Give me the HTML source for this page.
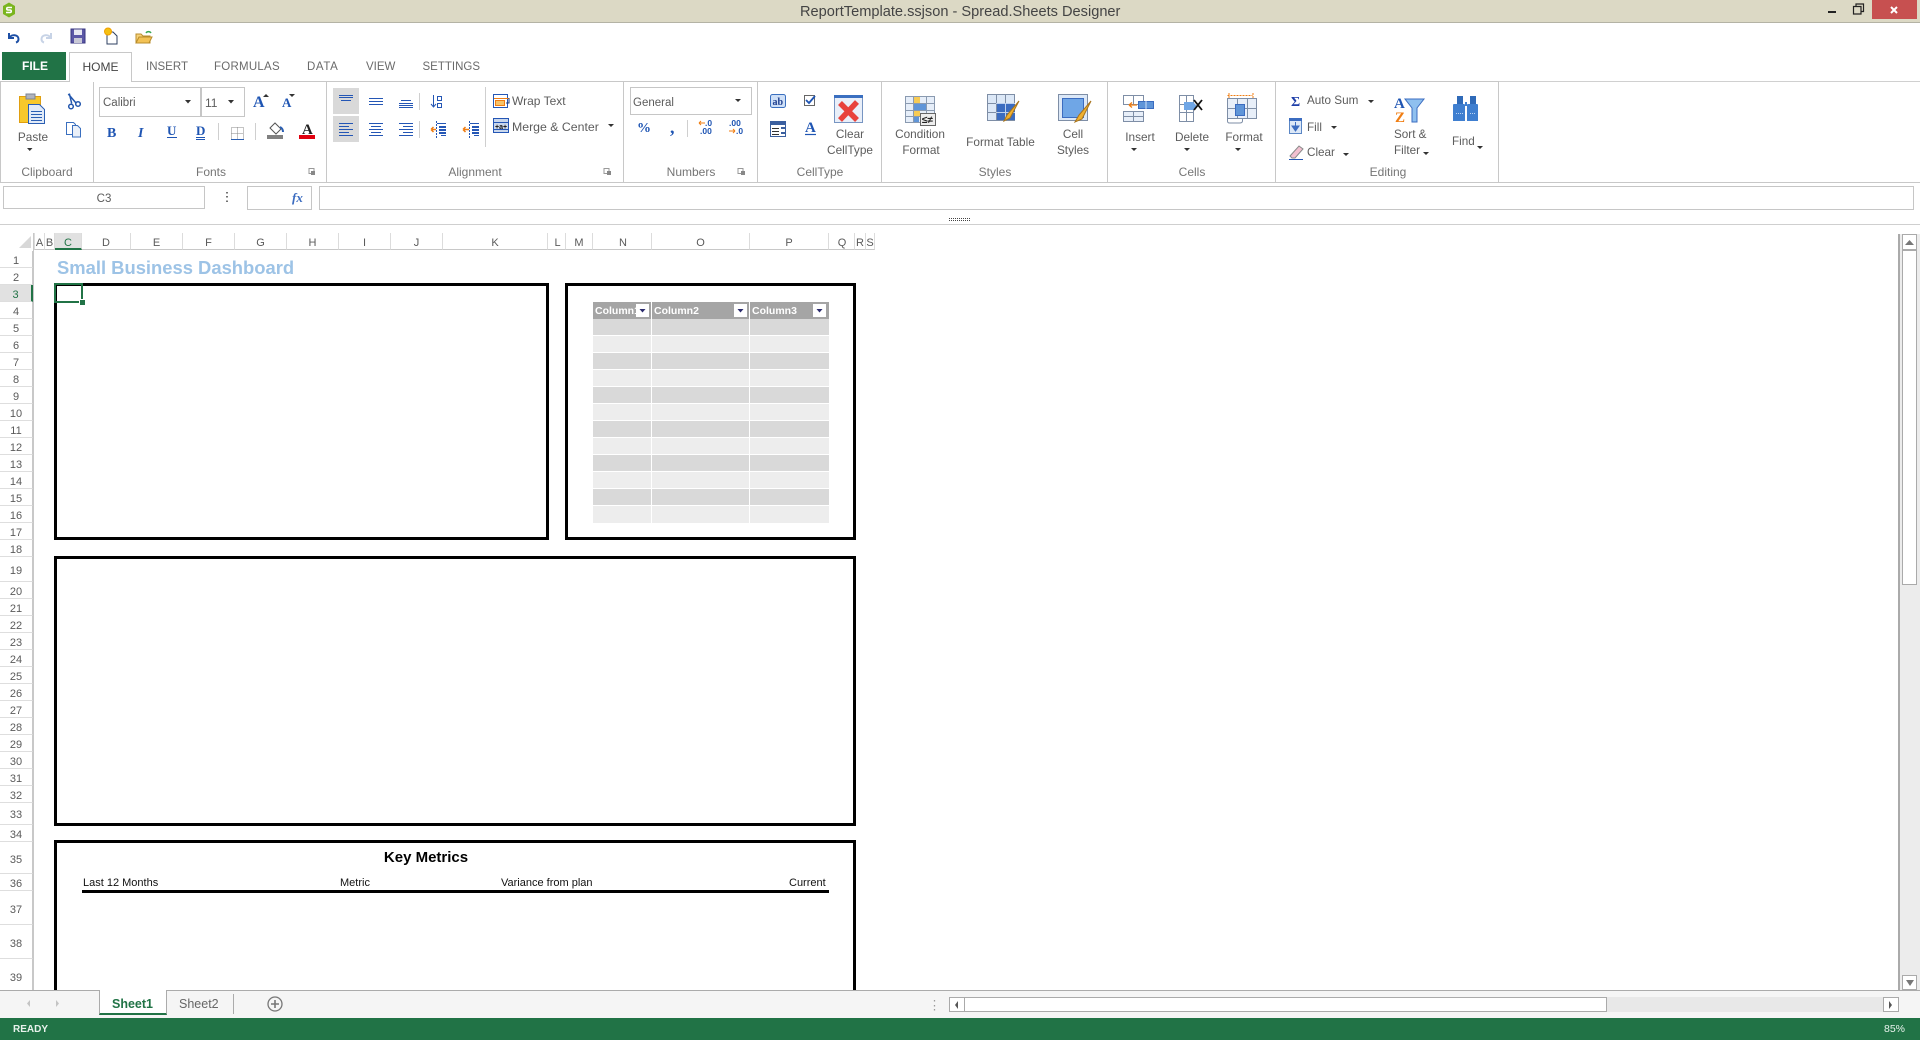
<!DOCTYPE html>
<html><head><meta charset="utf-8"><title>ReportTemplate.ssjson - Spread.Sheets Designer</title>
<style>
html,body{margin:0;padding:0;width:1920px;height:1040px;overflow:hidden;background:#fff;font-family:"Liberation Sans",sans-serif}
div{position:absolute;box-sizing:border-box}
.t{white-space:nowrap;font-size:11px;line-height:14px;color:#5c5c5c;height:14px}
.m{white-space:nowrap;font-size:11.8px;line-height:14px;color:#5c5c5c;height:14px;text-align:center}
.l{white-space:nowrap;font-size:12px;line-height:14px;color:#757575;height:14px;top:165px;text-align:center}
.tab{white-space:nowrap;font-size:11.5px;line-height:14px;color:#6a6a6a;top:60px}
.v{width:1px;background:#c8c8c8;top:81px;height:101px}
.r{left:0;width:33px;font-size:11px;color:#5a5a5a;display:flex;align-items:center;justify-content:center;border-bottom:1px solid #dedede;border-right:1px solid #c8c8c8;padding-top:3px}
.c{top:233px;height:17px;font-size:11px;color:#5a5a5a;display:flex;align-items:center;justify-content:center;border-right:1px solid #dcdcdc;border-bottom:1px solid #c8c8c8;padding-top:4px}
.b{border:3px solid #000}
.h{white-space:nowrap;font-size:11px;line-height:14px;color:#111;top:876px}
.bx{border:1px solid #c6c6c6;background:#fff}
.dk{background:#d9d9d9;left:593px;width:236px;height:16px}
.lt{background:#ededed;left:593px;width:236px;height:16px}
.fb{background:#fff;width:13px;height:13px;top:304px}
.hd{color:#fff;font-weight:bold;font-size:10.5px;line-height:14px;top:304px;white-space:nowrap;overflow:hidden}
</style></head><body>

<div style="left:0;top:0;width:1920px;height:23px;background:#dcd9c5;border-bottom:1px solid #b4b3a5"></div>
<div class="t" style="left:800px;top:5px;font-size:14.6px;color:#444">ReportTemplate.ssjson - Spread.Sheets Designer</div>
<div style="left:1872px;top:0;width:45px;height:19px;background:#c75050"></div>

<div style="left:2px;top:52px;width:64px;height:28px;background:#217346"></div>
<div class="t" style="left:22px;top:59px;color:#fff;font-weight:bold;font-size:12px;line-height:14px">FILE</div>
<div style="left:69px;top:52px;width:63px;height:30px;border:1px solid #c8c8c8;border-bottom:0;background:#fff;z-index:3"></div>
<div style="left:0;top:81px;width:1498px;height:1px;background:#c8c8c8"></div>
<div style="left:1498px;top:81px;width:422px;height:1px;background:#d0d0d0"></div>
<div style="left:0;top:182px;width:1920px;height:1px;background:#c8c8c8"></div>
<div class="tab" style="left:82.5px;color:#444;font-size:12px;z-index:4">HOME</div>
<div class="tab" style="left:146px">INSERT</div>
<div class="tab" style="left:214px;letter-spacing:.25px">FORMULAS</div>
<div class="tab" style="left:307px;letter-spacing:.6px">DATA</div>
<div class="tab" style="left:366px">VIEW</div>
<div class="tab" style="left:422.5px">SETTINGS</div>

<div class="v" style="left:0"></div><div class="v" style="left:93px"></div><div class="v" style="left:326px"></div><div class="v" style="left:623px"></div><div class="v" style="left:757px"></div><div class="v" style="left:881px"></div><div class="v" style="left:1107px"></div><div class="v" style="left:1275px"></div><div class="v" style="left:1498px"></div>

<div class="bx" style="left:99px;top:87px;width:102px;height:30px;border-width:1px"></div>
<div class="bx" style="left:201px;top:87px;width:44px;height:30px"></div>
<div class="t" style="left:103px;top:96px;font-size:11.5px">Calibri</div>
<div class="t" style="left:205px;top:96px;font-size:12px">11</div>

<div style="left:333px;top:88px;width:26px;height:26px;background:#d9d9d9"></div>
<div style="left:333px;top:116px;width:26px;height:26px;background:#d9d9d9"></div>
<div class="t" style="left:512px;top:94px;font-size:12px">Wrap Text</div>
<div class="t" style="left:512px;top:120px;font-size:12.3px">Merge &amp; Center</div>

<div class="bx" style="left:630px;top:87px;width:122px;height:28px"></div>
<div class="t" style="left:633px;top:96px;font-size:11.5px">General</div>

<div class="m" style="left:9px;width:48px;top:130px">Paste</div>
<div class="m" style="left:820px;width:60px;top:127px">Clear</div>
<div class="m" style="left:820px;width:60px;top:143px">CellType</div>
<div class="m" style="left:890px;width:60px;top:127px">Condition</div>
<div class="m" style="left:891px;width:60px;top:143px">Format</div>
<div class="m" style="left:960px;width:81px;top:135px">Format Table</div>
<div class="m" style="left:1043px;width:60px;top:127px">Cell</div>
<div class="m" style="left:1043px;width:60px;top:143px">Styles</div>
<div class="m" style="left:1110px;width:60px;top:130px">Insert</div>
<div class="m" style="left:1162px;width:60px;top:130px">Delete</div>
<div class="m" style="left:1214px;width:60px;top:130px">Format</div>
<div class="t" style="left:1307px;top:94px;font-size:11.7px">Auto Sum</div>
<div class="t" style="left:1307px;top:121px;font-size:11.7px">Fill</div>
<div class="t" style="left:1307px;top:146px;font-size:11.7px">Clear</div>
<div class="t" style="left:1394px;top:128px;font-size:11.7px">Sort &amp;</div>
<div class="t" style="left:1394px;top:144px;font-size:11.7px">Filter</div>
<div class="t" style="left:1452px;top:135px;font-size:11.7px">Find</div>

<div class="l" style="left:17px;width:60px">Clipboard</div>
<div class="l" style="left:181px;width:60px">Fonts</div>
<div class="l" style="left:445px;width:60px">Alignment</div>
<div class="l" style="left:661px;width:60px">Numbers</div>
<div class="l" style="left:790px;width:60px">CellType</div>
<div class="l" style="left:965px;width:60px">Styles</div>
<div class="l" style="left:1162px;width:60px">Cells</div>
<div class="l" style="left:1358px;width:60px">Editing</div>

<div class="bx" style="left:3px;top:186px;width:202px;height:23px"></div>
<div class="t" style="left:53px;width:102px;text-align:center;top:192px;font-size:11.5px">C3</div>
<div class="bx" style="left:247px;top:186px;width:65px;height:24px"></div>
<div class="bx" style="left:319px;top:186px;width:1595px;height:24px"></div>
<div style="left:0;top:224px;width:1920px;height:1px;background:#cfcfcf"></div>

<div class="c" style="left:33px;width:2px;border-bottom-color:#c8c8c8"></div>
<div class="c" style="left:35px;width:10px">A</div>
<div class="c" style="left:45px;width:10px">B</div>
<div class="c" style="left:55px;width:27px;background:#e1e1e1;color:#217346;border-bottom:2px solid #217346">C</div>
<div class="c" style="left:82px;width:49px">D</div>
<div class="c" style="left:131px;width:52px">E</div>
<div class="c" style="left:183px;width:52px">F</div>
<div class="c" style="left:235px;width:52px">G</div>
<div class="c" style="left:287px;width:52px">H</div>
<div class="c" style="left:339px;width:52px">I</div>
<div class="c" style="left:391px;width:52px">J</div>
<div class="c" style="left:443px;width:105px">K</div>
<div class="c" style="left:548px;width:18px;padding-left:2px">L</div>
<div class="c" style="left:566px;width:27px">M</div>
<div class="c" style="left:593px;width:59px;padding-left:2px">N</div>
<div class="c" style="left:652px;width:98px">O</div>
<div class="c" style="left:750px;width:79px">P</div>
<div class="c" style="left:829px;width:26px;padding-left:1px">Q</div>
<div class="c" style="left:855px;width:11px">R</div>
<div class="c" style="left:866px;width:9px">S</div>

<div style="left:33px;top:233px;width:1px;height:17px;background:#c8c8c8"></div>
<div style="left:33px;top:250px;width:1px;height:740px;background:#c8c8c8"></div>

<div class="r" style="top:251px;height:17px">1</div>
<div class="r" style="top:268px;height:17px">2</div>
<div class="r" style="top:285px;height:17px;background:#e1e1e1;color:#217346;border-right:2px solid #217346">3</div>
<div class="r" style="top:302px;height:17px">4</div>
<div class="r" style="top:319px;height:17px">5</div>
<div class="r" style="top:336px;height:17px">6</div>
<div class="r" style="top:353px;height:17px">7</div>
<div class="r" style="top:370px;height:17px">8</div>
<div class="r" style="top:387px;height:17px">9</div>
<div class="r" style="top:404px;height:17px">10</div>
<div class="r" style="top:421px;height:17px">11</div>
<div class="r" style="top:438px;height:17px">12</div>
<div class="r" style="top:455px;height:17px">13</div>
<div class="r" style="top:472px;height:17px">14</div>
<div class="r" style="top:489px;height:17px">15</div>
<div class="r" style="top:506px;height:17px">16</div>
<div class="r" style="top:523px;height:17px">17</div>
<div class="r" style="top:540px;height:17px">18</div>
<div class="r" style="top:557px;height:25px">19</div>
<div class="r" style="top:582px;height:17px">20</div>
<div class="r" style="top:599px;height:17px">21</div>
<div class="r" style="top:616px;height:17px">22</div>
<div class="r" style="top:633px;height:17px">23</div>
<div class="r" style="top:650px;height:17px">24</div>
<div class="r" style="top:667px;height:17px">25</div>
<div class="r" style="top:684px;height:17px">26</div>
<div class="r" style="top:701px;height:17px">27</div>
<div class="r" style="top:718px;height:17px">28</div>
<div class="r" style="top:735px;height:17px">29</div>
<div class="r" style="top:752px;height:17px">30</div>
<div class="r" style="top:769px;height:17px">31</div>
<div class="r" style="top:786px;height:17px">32</div>
<div class="r" style="top:803px;height:22px">33</div>
<div class="r" style="top:825px;height:17px">34</div>
<div class="r" style="top:842px;height:32px;padding-top:4px">35</div>
<div class="r" style="top:874px;height:17px;padding-top:4px">36</div>
<div class="r" style="top:891px;height:34px;padding-top:4px">37</div>
<div class="r" style="top:925px;height:34px;padding-top:4px">38</div>
<div class="r" style="top:959px;height:34px;padding-top:4px">39</div>

<div class="t" style="left:57px;top:257px;height:22px;line-height:22px;font-size:18.4px;font-weight:bold;color:#9dc3e6">Small Business Dashboard</div>

<div class="b" style="left:54px;top:283px;width:495px;height:257px"></div>
<div class="b" style="left:565px;top:283px;width:291px;height:257px"></div>
<div class="b" style="left:54px;top:556px;width:802px;height:270px"></div>
<div class="b" style="left:54px;top:840px;width:802px;height:200px"></div>

<div style="left:54px;top:283px;width:29px;height:20px;border:2px solid #217346"></div>
<div style="left:80px;top:300px;width:5px;height:5px;background:#217346;outline:1px solid #fff"></div>

<div style="left:593px;top:302px;width:236px;height:17px;background:#a5a5a5"></div>
<div class="hd" style="left:595px;width:41px">Column1</div>
<div class="hd" style="left:654px;width:70px">Column2</div>
<div class="hd" style="left:752px;width:60px">Column3</div>
<div class="fb" style="left:636px"></div><div class="fb" style="left:734px"></div><div class="fb" style="left:813px"></div>

<div class="dk" style="top:319px"></div><div class="lt" style="top:336px"></div><div class="dk" style="top:353px"></div><div class="lt" style="top:370px"></div><div class="dk" style="top:387px"></div><div class="lt" style="top:404px"></div><div class="dk" style="top:421px"></div><div class="lt" style="top:438px"></div><div class="dk" style="top:455px"></div><div class="lt" style="top:472px"></div><div class="dk" style="top:489px"></div><div class="lt" style="top:506px;height:17px"></div>
<div style="left:651px;top:302px;width:1px;height:221px;background:#fff"></div>
<div style="left:749px;top:302px;width:1px;height:221px;background:#fff"></div>

<div class="t" style="left:326px;width:200px;text-align:center;top:849px;height:18px;line-height:18px;font-size:15px;font-weight:bold;color:#000">Key Metrics</div>
<div class="h" style="left:83px">Last 12 Months</div>
<div class="h" style="left:340px">Metric</div>
<div class="h" style="left:501px">Variance from plan</div>
<div class="h" style="left:789px">Current</div>
<div style="left:82px;top:890px;width:747px;height:3px;background:#000"></div>

<div style="left:1898px;width:22px;background:#ececec;border-left:2px solid #aaa;top:234px;height:756px"></div>
<div style="left:1902px;top:234px;width:15px;height:16px;background:#fff;border:1px solid #aaa"></div>
<div style="left:1902px;top:249px;width:15px;height:336px;background:#fff;border:1px solid #aaa;border-top-width:2px"></div>
<div style="left:1902px;top:975px;width:15px;height:15px;background:#fff;border:1px solid #aaa"></div>

<div style="left:0;top:990px;width:1920px;height:28px;background:#f5f5f5;border-top:1px solid #ababab"></div>
<div style="left:99px;top:990px;width:68px;height:25px;background:#fff;border:1px solid #ababab;border-top:0;border-bottom:2px solid #217346"></div>
<div class="t" style="left:112px;top:997px;font-size:12.5px;font-weight:bold;color:#217346">Sheet1</div>
<div class="t" style="left:179px;top:997px;font-size:12.5px;color:#666">Sheet2</div>
<div style="left:233px;top:994px;width:1px;height:20px;background:#ababab"></div>

<div style="left:949px;top:997px;width:950px;height:15px;background:#e8e8e8"></div>
<div style="left:949px;top:997px;width:16px;height:15px;background:#fff;border:1px solid #aaa"></div>
<div style="left:964px;top:997px;width:643px;height:15px;background:#fff;border:1px solid #aaa"></div>
<div style="left:1883px;top:997px;width:16px;height:15px;background:#fff;border:1px solid #aaa"></div>

<div style="left:0;top:1018px;width:1920px;height:22px;background:#217346"></div>
<div class="t" style="left:13px;top:1023px;font-size:10px;font-weight:bold;color:#e8f2ec">READY</div>
<div class="t" style="left:1884px;top:1022px;font-size:10.5px;color:#e8f2ec">85%</div>

<svg width="1920" height="1040" viewBox="0 0 1920 1040" style="position:absolute;left:0;top:0;z-index:5" xmlns="http://www.w3.org/2000/svg">
<!-- logo -->
<path d="M9 2.5l6 3.5v8l-6 3.5-6-3.5v-8z" fill="#7ab51d"/>
<path d="M12 7.5H8a1 1 0 0 0 0 2.500h2a1 1 0 0 1 0 2.500H6" fill="none" stroke="#fff" stroke-width="1.600"/>
<!-- window -->
<path d="M1828 12h8" stroke="#222" stroke-width="2"/>
<path d="M1853.500 6.500h7.500v7.500h-7.500zM1856 6.500v-2.500h7.500v7.500h-2.500" fill="none" stroke="#222" stroke-width="1.200"/>
<path d="M1891 7l6 6M1897 7l-6 6" stroke="#fff" stroke-width="2"/>
<!-- QAT -->
<path d="M9 33v5h5M9.500 37.500c2-3.500 9-3 9 1.500 0 2-1 3-2.500 3.500" fill="none" stroke="#1d4fa5" stroke-width="2"/>
<path d="M51 33v5h-5M50.500 37.500c-2-3.500-9-3-9 1.500 0 2 1 3 2.500 3.500" fill="none" stroke="#c7d3e6" stroke-width="2"/>
<rect x="71" y="29" width="14" height="14" fill="#5b57a6" stroke="#3a3780"/><rect x="74" y="29.500" width="8" height="5.500" fill="#e8e8f2"/><rect x="74" y="38" width="8" height="5" fill="#c9c9d6"/>
<path d="M107 32h6l4 4v8h-10z" fill="#fff" stroke="#2c3f60"/><circle cx="108" cy="31.500" r="3.500" fill="#f5c012" stroke="#f0a000"/>
<path d="M136 43v-9h5l2 2h7v7z" fill="#f6d27a" stroke="#b98d2c"/><path d="M136 43l3-6h13l-3 6z" fill="#f3c255" stroke="#b98d2c"/><path d="M146 33a3 3 0 0 1 5 0" fill="none" stroke="#3aa655" stroke-width="1.500"/>
<!-- paste -->
<rect x="19.500" y="96.500" width="21" height="26" fill="#f8c82b" stroke="#e09f10"/>
<rect x="26" y="94" width="9" height="5" fill="#b0b4bd" stroke="#7c8494"/>
<path d="M28.500 104.500h11l5 5v14h-16z" fill="#e2ebf8" stroke="#2b5fb3"/>
<path d="M31 111.500h11M31 114.500h11M31 117.500h11M31 120.500h11" stroke="#2b5fb3"/>
<path d="M27 148h5.500l-2.750 3z" fill="#333"/>
<path d="M68.300 94l7.700 9M69.300 93.500l2.400 10" stroke="#2256ad" stroke-width="1.500" fill="none"/><circle cx="71" cy="106.500" r="2.300" fill="none" stroke="#2256ad" stroke-width="1.500"/><circle cx="78" cy="104" r="2.300" fill="none" stroke="#2256ad" stroke-width="1.500"/>
<path d="M66.500 122.500h7l2 2v10h-9z" fill="#fff" stroke="#3a6fbf"/><path d="M72.500 125.500h5l3 3v8.500h-8z" fill="#eaf0f9" stroke="#3a6fbf"/>
<!-- font -->
<path d="M185 100h6l-3 3.500z" fill="#333"/><path d="M228 100h6l-3 3.500z" fill="#333"/>
<text x="253" y="107" font-family="Liberation Serif,serif" font-weight="bold" font-size="16" fill="#1f55b3">A</text>
<path d="M263 97h6l-3-3z" fill="#333"/>
<text x="282" y="107" font-family="Liberation Serif,serif" font-weight="bold" font-size="13" fill="#1f55b3">A</text>
<path d="M289 94h6l-3 3z" fill="#333"/>
<text x="107" y="137" font-family="Liberation Serif,serif" font-weight="bold" font-size="14" fill="#1f55b3">B</text>
<text x="138" y="137" font-family="Liberation Serif,serif" font-weight="bold" font-style="italic" font-size="14" fill="#1f55b3">I</text>
<text x="167" y="135" font-family="Liberation Serif,serif" font-weight="bold" font-size="13" fill="#1f55b3">U</text>
<path d="M167 137.500h10" stroke="#1f55b3"/>
<text x="196" y="135" font-family="Liberation Serif,serif" font-weight="bold" font-size="13" fill="#1f55b3">D</text>
<path d="M196 137.500h9M196 139.500h9" stroke="#1f55b3"/>
<path d="M218.500 123v17M255.500 123v17" stroke="#cfcfcf"/>
<path d="M231.500 127.500h12v12h-12zM237.500 127.500v12M231.500 133.500h12" fill="none" stroke="#8a8a8a" stroke-dasharray="1 1"/><path d="M231 139.500h13" stroke="#2b5fb3"/>
<path d="M270 128l5-5 6 6-5 5z" fill="#fff" stroke="#555"/><path d="M280 127c2 1 3 3 3 5" fill="none" stroke="#2b5fb3" stroke-width="2"/><rect x="267" y="135" width="16" height="4" fill="#808080"/>
<text x="302" y="134" font-family="Liberation Serif,serif" font-weight="bold" font-size="15" fill="#222">A</text>
<rect x="299" y="135" width="16" height="4" fill="#e0000f"/>
<path d="M309 168.500h5v5h-5z" fill="none" stroke="#999"/><path d="M311 171h4v4h-4z" fill="#888"/>
<!-- alignment -->
<g stroke="#2456b5" fill="none">
<path d="M339 95.500h14M339 97.500h14M341 100.500h10"/>
<path d="M369 98.500h14M369 101.500h14M369 104.500h14"/>
<path d="M401 100.500h10M399 103.500h14M399 105.500h14M399 107.500h14"/>
<path d="M339 123.500h14M339 126.500h10M339 129.500h14M339 132.500h10M339 135.500h14"/>
<path d="M369 123.500h14M371 126.500h10M369 129.500h14M371 132.500h10M369 135.500h14"/>
<path d="M399 123.500h14M403 126.500h10M399 129.500h14M403 132.500h10M399 135.500h14"/>
<path d="M433.500 95v12M431 104l2.500 3 2.500-3"/>
<path d="M437.500 96.500h4v4h-4zM437.500 103.500h4v4h-4z"/>
<path d="M437 123.500h9M441 135.500h5M470 123.500h9M474 135.500h5"/>
<path d="M436.500 121v18M469.500 121v18" stroke-dasharray="2 1"/>
</g>
<path d="M439 127h7M439 130h7M439 133h7M472 127h7M472 130h7M472 133h7" stroke="#2456b5" stroke-width="2" fill="none"/>
<path d="M431 129.500h5M431 129.500l2.500-2.500M431 129.500l2.500 2.500M463 129.500h6M463 129.500l2.500-2.500M463 129.500l2.500 2.500" stroke="#f07d12" stroke-width="1.500" fill="none"/>
<path d="M419.500 93v17M419.500 121v17" stroke="#cfcfcf"/><path d="M485.500 87v60" stroke="#cfcfcf"/>
<rect x="493.500" y="94.500" width="14" height="13" fill="#fff" stroke="#2456b5"/><path d="M494 98.500h15" stroke="#f07d12"/><rect x="495.500" y="100.500" width="9" height="5" fill="#f6c36a" stroke="#f07d12"/><path d="M509 98v5h-3" stroke="#1f3b7a" fill="none"/>
<rect x="493.500" y="118.500" width="15" height="14" fill="#c9d7ec" stroke="#2456b5"/><path d="M494 122.500h14M494 129.500h14" stroke="#2456b5"/><text x="495" y="129" font-size="7" font-weight="bold" fill="#111" font-family="Liberation Sans,sans-serif">+a+</text>
<path d="M608 124h6l-3 3z" fill="#333"/>
<path d="M604 168.500h5v5h-5z" fill="none" stroke="#999"/><path d="M607 171h4v4h-4z" fill="#888"/>
<!-- numbers -->
<path d="M735 99h6l-3 3z" fill="#333"/>
<text x="637" y="132" font-family="Liberation Serif,serif" font-weight="bold" font-size="14" fill="#1f55b3">%</text>
<text x="670" y="133" font-family="Liberation Serif,serif" font-weight="bold" font-size="18" fill="#1f55b3">,</text>
<path d="M687.500 120v17" stroke="#cfcfcf"/>
<text x="705" y="126" font-size="8.500" font-weight="bold" fill="#1f55b3" font-family="Liberation Sans,sans-serif">.0</text>
<text x="700" y="134" font-size="8.500" font-weight="bold" fill="#1f55b3" font-family="Liberation Sans,sans-serif">.00</text>
<path d="M699 123h6M699 123l2-2M699 123l2 2" stroke="#f07d12" fill="none"/>
<text x="729" y="126" font-size="8.500" font-weight="bold" fill="#1f55b3" font-family="Liberation Sans,sans-serif">.00</text>
<text x="736" y="134" font-size="8.500" font-weight="bold" fill="#1f55b3" font-family="Liberation Sans,sans-serif">.0</text>
<path d="M729 131h6M735 131l-2-2M735 131l-2 2" stroke="#f07d12" fill="none"/>
<path d="M738 168.500h5v5h-5z" fill="none" stroke="#999"/><path d="M741 171h4v4h-4z" fill="#888"/>
<!-- celltype -->
<rect x="770.500" y="94.500" width="15" height="13" rx="2" fill="#cfe0f7" stroke="#3a6fbf"/><text x="772.500" y="105" font-size="10" font-weight="bold" font-family="Liberation Serif,serif" fill="#1f3f8f">ab</text>
<rect x="804.500" y="95.500" width="10" height="10" fill="#fff" stroke="#666"/><path d="M806 100l3 3 6-7" fill="none" stroke="#1f55b3" stroke-width="1.800"/>
<rect x="770.500" y="121.500" width="15" height="15" fill="#fff" stroke="#3a5f9f"/><rect x="771" y="122" width="15" height="3" fill="#3a5f9f"/><path d="M772 128.500h7M772 131.500h7M772 134.500h7" stroke="#333"/><path d="M781 128h4M781 133h4" stroke="#3a5f9f" stroke-width="2"/>
<text x="805" y="132" font-family="Liberation Serif,serif" font-weight="bold" font-size="15" fill="#1f55b3">A</text><path d="M805 134.500h11" stroke="#1f55b3" stroke-width="1.200"/>
<rect x="834.500" y="95.500" width="28" height="27" fill="#e9eff9" stroke="#7795c2"/><rect x="834" y="95" width="29" height="3" fill="#3a6fc0"/>
<path d="M840 103l17 17M857 102l-17 18" stroke="#e8423c" stroke-width="5.500"/>
<!-- styles -->
<g fill="#e6eef9" stroke="#8a9ab0"><rect x="905.500" y="96.500" width="29" height="26"/></g><path d="M905 103.500h30M905 110.500h30M905 116.500h30M913.500 96v27M926.500 96v27" stroke="#8a9ab0"/>
<rect x="914" y="97" width="6" height="6" fill="#f7cb55"/><rect x="914" y="104" width="12" height="6" fill="#5f95d8"/><rect x="914" y="111" width="6" height="5" fill="#f7cb55"/><rect x="914" y="117" width="5" height="5" fill="#5f95d8"/>
<rect x="920.500" y="113.500" width="15" height="12" fill="#eee" stroke="#666"/><text x="922" y="123" font-size="10" font-weight="bold" fill="#222" font-family="Liberation Sans,sans-serif">≤≠</text>
<rect x="987.500" y="94.500" width="27" height="26" fill="#dce8f7" stroke="#7e8ea6"/><path d="M987 103.500h28M987 112.500h28M996.500 94v27M1005.500 94v27" stroke="#7e8ea6"/><rect x="997" y="104" width="18" height="16" fill="#3b6cc0"/><path d="M996 103.500h19M996 112.500h19M1005.500 103v18" stroke="#bcd0ee"/>
<path d="M1019 101l-12 14-3 6 6-3z" fill="#efb030" stroke="#a8741c"/>
<rect x="1058.500" y="94.500" width="29" height="26" fill="#dce8f7" stroke="#7e8ea6"/><rect x="1062.500" y="98.500" width="21" height="19" fill="#6fa6e6" stroke="#3b6cc0"/>
<path d="M1091 101l-12 14-4 7 7-3z" fill="#efb030" stroke="#a8741c"/>
<!-- cells -->
<rect x="1123.500" y="95.500" width="20" height="9" fill="#fff" stroke="#7e8ea6"/><path d="M1133.500 95v9" stroke="#7e8ea6"/>
<rect x="1123.500" y="111.500" width="20" height="10" fill="#e8eff9" stroke="#7e8ea6"/><path d="M1133.500 111v10M1123 116.500h20" stroke="#7e8ea6"/>
<rect x="1138.500" y="101.500" width="15" height="7" fill="#5f95d8" stroke="#3b6cc0"/><path d="M1146 101v8" stroke="#cfe0f7"/>
<path d="M1129 105h8M1129 105l3-2.500M1129 105l3 2.500" stroke="#f07d12" fill="none" stroke-width="1.300"/>
<rect x="1179.500" y="95.500" width="14" height="26" fill="#fff" stroke="#7e8ea6"/><path d="M1179 104.500h14M1179 112.500h14M1186.500 95v27" stroke="#7e8ea6"/>
<path d="M1184 102h9l4 4-4 4h-9z" fill="#6fa6e6"/>
<path d="M1194 100l8 10M1202 100l-8 10" stroke="#111" stroke-width="1.800"/>
<path d="M1227.500 95.500h25M1229 93v5M1253 93v5" stroke="#f07d12" stroke-dasharray="2 1" fill="none"/>
<rect x="1227.500" y="98.500" width="29" height="20" fill="#e8eff9" stroke="#7e8ea6"/><path d="M1237.500 98v20M1247.500 98v20M1227 108.500h30" stroke="#7e8ea6"/><rect x="1235.500" y="104.500" width="9" height="11" fill="#5f95d8" stroke="#3b6cc0"/><path d="M1227.500 118v3q0 2 2 2h10q3 0 3-2v-3" fill="none" stroke="#7e8ea6"/>
<path d="M1131 148h6l-3 3z M1184 148h6l-3 3z M1235 148h6l-3 3z" fill="#333"/>
<!-- editing -->
<text x="1291" y="106" font-family="Liberation Serif,serif" font-weight="bold" font-size="14" fill="#1f3fa8">Σ</text>
<path d="M1368 100h6l-3 3z M1331 126h6l-3 3z M1343 153h6l-3 3z M1423 152h6l-3 3z M1477 146h6l-3 3z" fill="#333"/>
<rect x="1289.500" y="118.500" width="12" height="15" fill="#dce8f7" stroke="#5a86c5"/><rect x="1289" y="118" width="13" height="3" fill="#3b6cc0"/><path d="M1295.500 122v7M1292 126h7l-3.500 5z" fill="#3b6cc0" stroke="#3b6cc0"/>
<path d="M1290 156l9-10 4 3-8 9h-3z" fill="#f2c0d0" stroke="#8a8a8a"/><path d="M1289 159.500h14" stroke="#2456b5"/>
<text x="1394" y="108" font-family="Liberation Serif,serif" font-weight="bold" font-size="15" fill="#1f55b3">A</text>
<text x="1395" y="122" font-family="Liberation Serif,serif" font-weight="bold" font-size="15" fill="#f07d12">Z</text>
<path d="M1405 99h19l-7 9v14h-5v-14z" fill="#8fc0ef" stroke="#3b6cc0"/>
<path d="M1453 105q0-1 1-1h10q1 0 1 1v16h-12zM1467 105q0-1 1-1h9q1 0 1 1v16h-11zM1465 102h2v4h-2z" fill="#3f7fd0"/><rect x="1457" y="96" width="6" height="8" fill="#2f6ab8"/><rect x="1470" y="96" width="6" height="8" fill="#2f6ab8"/><path d="M1456 113.500h7M1470 113.500h6" stroke="#bcd4f2" stroke-dasharray="1 1"/>
<!-- formula bar -->
<path d="M227 192v1.500M227 196v1.500M227 200.500v1.500" stroke="#444" stroke-width="1.500"/>
<text x="292" y="202" font-family="Liberation Serif,serif" font-style="italic" font-weight="bold" font-size="13" fill="#3b6cc0">fx</text>
<path d="M949 218.500h22M949 220.500h22" stroke="#444" stroke-dasharray="1 1"/>
<!-- sheet corner -->
<path d="M19 248l12-12v12z" fill="#d8d8d8"/>
<!-- filter arrows -->
<path d="M639.500 309h6l-3 3.500zM737.500 309h6l-3 3.500zM816.500 309h6l-3 3.500z" fill="#2c2c6e"/>
<!-- scroll arrows -->
<path d="M1905 245h9l-4.500-5z" fill="#777"/><path d="M1906 980h8l-4 6z" fill="#777"/>
<path d="M958 1001v8l-3-4z" fill="#555"/><path d="M1889 1001v8l3-4z" fill="#555"/>
<path d="M30 1000v7l-3-3.500z" fill="#c4c4c4"/><path d="M56 1000v7l3-3.500z" fill="#c4c4c4"/>
<circle cx="275" cy="1004" r="7" fill="none" stroke="#777" stroke-width="1.300"/><path d="M271 1004h8M275 1000v8" stroke="#777" stroke-width="1.600"/>
<path d="M934.500 1000v1.500M934.500 1005v1.500M934.500 1009v1.500" stroke="#999" stroke-width="1.300"/>
</svg>
</body></html>
